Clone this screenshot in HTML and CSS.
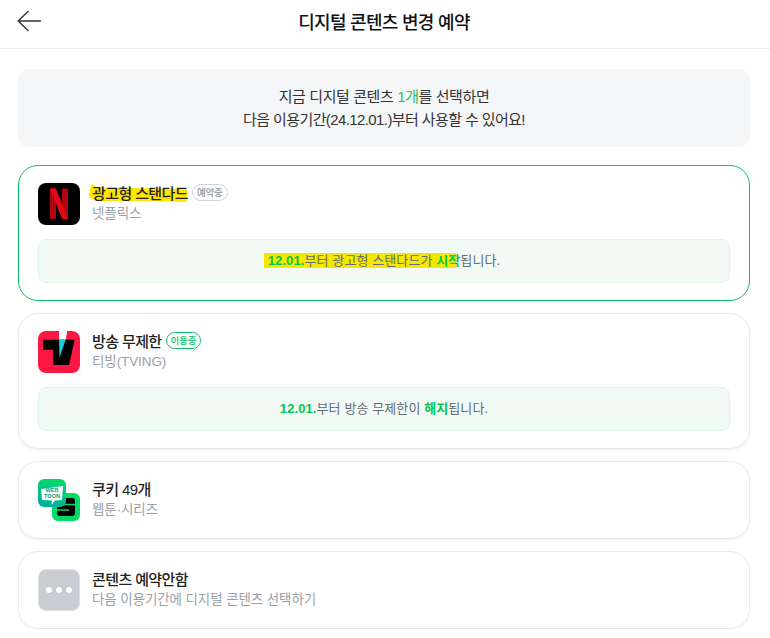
FILE: index.html
```html
<!DOCTYPE html>
<html lang="ko">
<head>
  <meta charset="UTF-8">
  <meta name="viewport" content="width=device-width, initial-scale=1.0">
  <title>디지털 콘텐츠 변경 예약</title>
  <link rel="stylesheet" href="styles.css">
</head>
<body>
  <header class="topbar">
    <button class="back" aria-label="뒤로">
      <svg width="24" height="22" viewBox="0 0 24 22" fill="none" stroke="#333" stroke-width="1.4">
        <path d="M11.5 1 1.200 11l10.300 10M1.200 11H24"/>
      </svg>
    </button>
    <h1>디지털 콘텐츠 변경 예약</h1>
  </header>

  <main class="container">
    <section class="notice">
      <p>지금 디지털 콘텐츠 <em>1개</em>를 선택하면</p>
      <p class="tight">다음 이용기간(24.12.01.)부터 사용할 수 있어요!</p>
    </section>

    <!-- Netflix -->
    <article class="card">
      <div class="item">
        <svg class="icon" viewBox="0 0 42 42">
          <rect width="42" height="42" rx="8" fill="#000"/>
          <path d="M12 5.500h6v30l-6 1z" fill="#b1060f"/>
          <path d="M24 5.500h6v31l-6-1z" fill="#b1060f"/>
          <path d="M12 5.500h6l12 31-6-1z" fill="#e50914"/>
        </svg>
        <div class="info">
          <div class="name-row">
            <span class="name marked">
              <svg class="marker" viewBox="0 0 98 18">
                <path d="M3 0 8 3.500 98 5V18L60 17H8L0 13 1 5z" fill="#ffe600"/>
              </svg>
              <span class="marked-text">광고형 스탠다드</span>
            </span>
            <span class="badge">예약중</span>
          </div>
          <div class="sub">넷플릭스</div>
        </div>
      </div>
      <div class="message">
        <span class="marked-line"><strong>12.01.</strong>부터 광고형 스탠다드가 <strong>시작</strong></span>됩니다.
      </div>
    </article>

    <!-- Tving -->
    <article class="card plain">
      <div class="item">
        <svg class="icon" viewBox="0 0 42 42">
          <rect width="42" height="42" rx="8" fill="#ff1744"/>
          <path d="M21 0h8.300l-1.600 8.700H21z" fill="#fff"/>
          <path d="M5 8.700h31.700L31 34H15V18.700H5z" fill="#000"/>
          <path d="M21 8.700h6.700l-6.200 18z" fill="#19c9d8"/>
        </svg>
        <div class="info">
          <div class="name-row">
            <span class="name">방송 무제한</span>
            <span class="badge active">이용중</span>
          </div>
          <div class="sub">티빙(TVING)</div>
        </div>
      </div>
      <div class="message">
        <strong>12.01.</strong>부터 방송 무제한이 <strong>해지</strong>됩니다.
      </div>
    </article>

    <!-- Webtoon / Series -->
    <article class="card plain">
      <div class="item">
        <svg class="icon" viewBox="0 0 42 42">
          <defs>
            <linearGradient id="toon" x1="0.7" y1="0" x2="0.3" y2="1">
              <stop offset="0" stop-color="#00dc64"/>
              <stop offset="1" stop-color="#00ad9f"/>
            </linearGradient>
          </defs>
          <rect x="14" y="14" width="28" height="28" rx="6" fill="#00dc64"/>
          <rect x="19" y="19" width="18" height="18" rx="3" fill="#000"/>
          <path d="M25 25.500h12M19 31h12" stroke="#00dc64" stroke-width="1.600"/>
          <rect width="28" height="28" rx="6" fill="url(#toon)"/>
          <path d="M3 10 25 7 24 21 17 21.500 13.500 26 14 21.500 4 21z" fill="#fff"/>
          <text class="webtoon" x="14" y="13">WEB</text>
          <text class="webtoon" x="14" y="18.500">TOON</text>
        </svg>
        <div class="info">
          <div class="name-row">
            <span class="name">쿠키 49개</span>
          </div>
          <div class="sub">웹툰·시리즈</div>
        </div>
      </div>
    </article>

    <!-- No reservation -->
    <article class="card plain">
      <div class="item">
        <div class="icon dots"><i></i><i></i><i></i></div>
        <div class="info">
          <div class="name-row">
            <span class="name">콘텐츠 예약안함</span>
          </div>
          <div class="sub">다음 이용기간에 디지털 콘텐츠 선택하기</div>
        </div>
      </div>
    </article>
  </main>
</body>
</html>
```

FILE: styles.css
```css
* {
  box-sizing: border-box;
}

body {
  font-family: "Liberation Sans", "Noto Sans CJK KR", sans-serif;
  margin: 0;
  background-color: #fff;
  color: #222;
}

.topbar {
  position: relative;
  display: flex;
  align-items: center;
  justify-content: center;
  height: 49px;
  padding: 0 2px 6px 0;
  border-bottom: 1px solid #eaeaf0;
}

.back {
  position: absolute;
  left: 17px;
  top: 10px;
  padding: 0;
  border: none;
  background: none;
  line-height: 0;
}

h1 {
  margin: 0;
  font-size: 18px;
  font-weight: 500;
  letter-spacing: -0.7px;
  color: #111;
}

.container {
  display: flex;
  flex-direction: column;
  gap: 12px;
  padding: 20px 20px 0 18px;
}

.notice {
  height: 78px;
  margin-bottom: 6px;
  padding-top: 16px;
  background-color: #f5f6f8;
  border-radius: 10px;
  text-align: center;
  font-size: 15px;
  line-height: 23px;
  letter-spacing: -0.4px;
  color: #333;
}

.notice p {
  margin: 0;
}

.notice .tight {
  letter-spacing: -0.6px;
}

.notice em {
  font-style: normal;
  color: #22c55e;
}

.card {
  padding: 17px 19px;
  border: 1px solid #06c167;
  border-radius: 20px;
  background-color: #fff;
}

.card.plain {
  border-color: #e8e8ec;
  box-shadow: 0 1px 3px rgba(0, 0, 0, 0.06);
}

.item {
  display: flex;
  align-items: flex-start;
  gap: 12px;
  height: 42px;
}

.icon {
  flex: none;
  width: 42px;
  height: 42px;
}

.webtoon {
  font-family: "Liberation Sans", sans-serif;
  font-size: 5.500px;
  font-weight: 700;
  text-anchor: middle;
  fill: #00a070;
}

.dots {
  display: flex;
  align-items: center;
  justify-content: center;
  gap: 4px;
  background-color: #c9ccd1;
  border: 1px solid #dfe1e4;
  border-radius: 8px;
}

.dots i {
  width: 6px;
  height: 6px;
  border-radius: 50%;
  background-color: #fff;
}

.info {
  display: flex;
  flex-direction: column;
  gap: 3px;
}

.name-row {
  display: flex;
  align-items: center;
  gap: 4px;
  height: 18px;
}

.name {
  font-size: 15px;
  font-weight: 500;
  letter-spacing: -0.6px;
  color: #222;
}

.marked {
  position: relative;
}

.marker {
  position: absolute;
  left: -3px;
  top: 2px;
  width: 98px;
  height: 18px;
}

.marked-text {
  position: relative;
}

.badge {
  padding: 0 4px;
  font-size: 9.500px;
  font-weight: 500;
  line-height: 15px;
  color: #8e939c;
  border: 1px solid #d0d3d8;
  border-radius: 9px;
  letter-spacing: -0.2px;
}

.badge.active {
  color: #06c167;
  border-color: #06c167;
}

.sub {
  font-size: 13.500px;
  line-height: 20px;
  letter-spacing: -0.1px;
  color: #9a9fa8;
}

.message {
  position: relative;
  z-index: 0;
  height: 44px;
  margin-top: 14px;
  background-color: #f1faf5;
  border: 1px solid #dff5e9;
  border-radius: 8px;
  text-align: center;
  font-size: 13px;
  line-height: 41px;
  letter-spacing: 0.1px;
  color: #666b75;
}

.message strong {
  color: #00c853;
  font-weight: 700;
}

.marked-line {
  position: relative;
}

/* highlight sits a little left of the text it marks */
.marked-line::before {
  content: "";
  position: absolute;
  z-index: -1;
  left: -4px;
  right: 4px;
  top: 0;
  bottom: 0;
  background-color: #f5e800;
}
```
